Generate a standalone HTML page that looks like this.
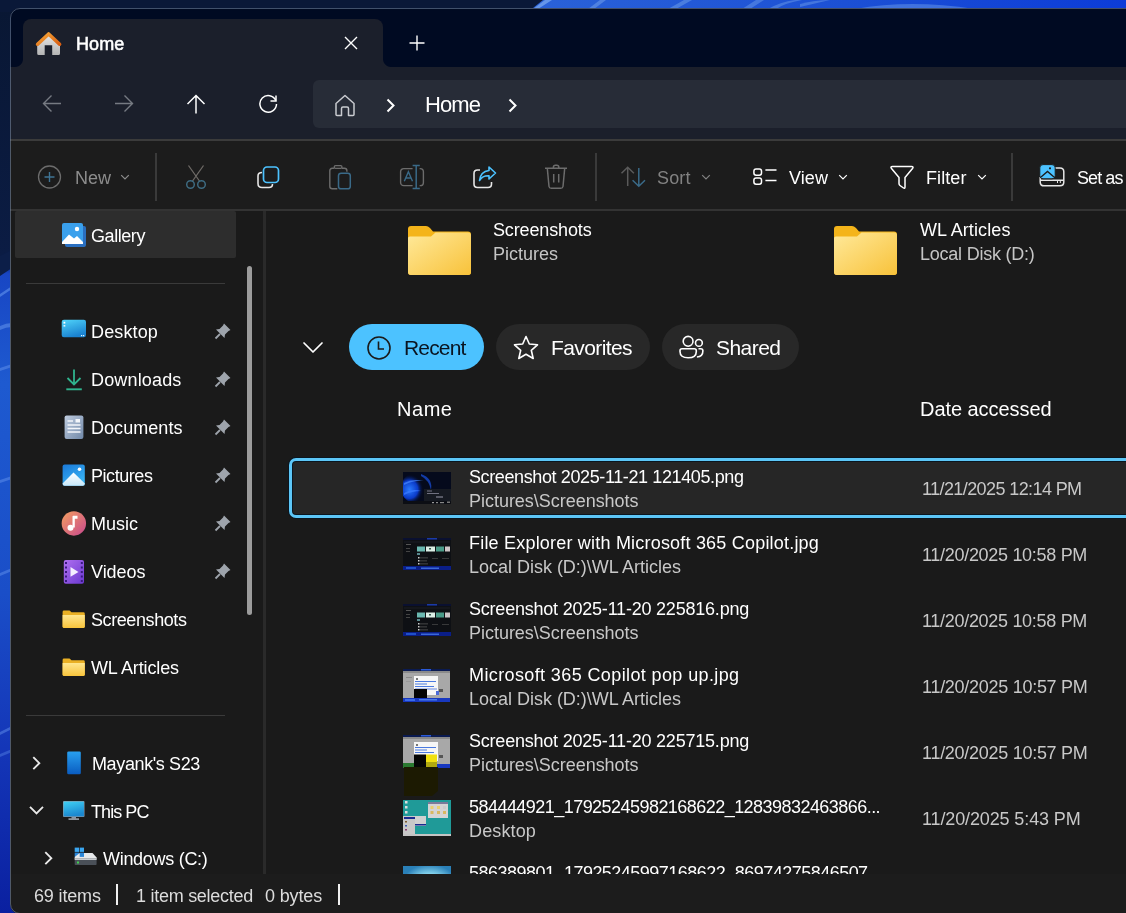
<!DOCTYPE html><html><head><meta charset="utf-8"><style>*{margin:0;padding:0;box-sizing:border-box}
html,body{width:1126px;height:913px;overflow:hidden}
body{position:relative;font-family:"Liberation Sans",sans-serif;color:#fff;background:#0b1a3a}
.a{position:absolute;display:block}
.t{position:absolute;white-space:nowrap;line-height:1;will-change:transform}
#win{position:absolute;left:10px;top:8px;width:1200px;height:906px;border-radius:10px;overflow:hidden;background:#1c1c1c}
#wi{position:absolute;left:-10px;top:-8px;width:1126px;height:913px}
#wb{position:absolute;left:10px;top:8px;width:1200px;height:906px;border-radius:10px;border:1px solid rgba(130,150,180,.5)}
</style></head><body><svg class="a" style="left:0;top:0" width="1126" height="913" viewBox="0 0 1126 913">
<defs>
<linearGradient id="wpl" x1="0" y1="0" x2="0" y2="913" gradientUnits="userSpaceOnUse">
<stop offset="0" stop-color="#091733"/><stop offset="0.28" stop-color="#0b1c44"/>
<stop offset="0.30" stop-color="#1846c4"/><stop offset="0.42" stop-color="#1e5ad0"/>
<stop offset="0.65" stop-color="#1a4ec8"/><stop offset="0.82" stop-color="#1436b8"/><stop offset="1" stop-color="#0a20a0"/></linearGradient>
<linearGradient id="wpt" x1="0" y1="0" x2="1126" y2="0" gradientUnits="userSpaceOnUse">
<stop offset="0" stop-color="#091733"/><stop offset="0.46" stop-color="#0c1e48"/>
<stop offset="0.475" stop-color="#2a62d8"/><stop offset="0.75" stop-color="#1c50d4"/><stop offset="1" stop-color="#0c3cd8"/></linearGradient>
</defs>
<rect x="0" y="0" width="1126" height="913" fill="url(#wpl)"/>
<path d="M0 256L12 250V268L0 276Z" fill="#0c1e48"/>
<rect x="0" y="0" width="1126" height="12" fill="url(#wpt)"/>
<path d="M0 0H543L533 8V12H0Z" fill="#0a1838"/>
<path d="M533 9 L545 0 L552 0 L538 9Z" fill="#7aa8f0" opacity=".75"/>
<path d="M588 9 L600 0 L606 0 L594 9Z" fill="#6a9ae8" opacity=".6"/>
<path d="M668 9 L684 0 L692 0 L676 9Z" fill="#6a9ae8" opacity=".55"/>
<path d="M742 9 L756 0 L764 0 L750 9Z" fill="#6a9ae8" opacity=".5"/>
<path d="M768 9 Q780 2 795 0 L802 0 Q785 3 776 9Z" fill="#6a9ae8" opacity=".5"/>
<path d="M800 4 Q815 0 830 0 L800 7Z" fill="#6a9ae8" opacity=".5"/>
<path d="M855 9 Q910 -1 975 9Z" fill="#6a9ae8" opacity=".5"/>
<path d="M0 294 L12 286 L12 289 L0 297Z" fill="#6a9af0" opacity=".55"/>
<path d="M0 326 Q6 323 12 323 L12 327 Q6 327 0 330Z" fill="#6a9af0" opacity=".5"/>
<path d="M0 368 L12 364 L12 367 L0 371Z" fill="#6a9af0" opacity=".45"/>
<path d="M0 480 L12 476 L12 479 L0 483Z" fill="#6a9af0" opacity=".45"/>
<path d="M0 573 L12 568 L12 571 L0 576Z" fill="#6a9af0" opacity=".45"/>
<path d="M0 732 L12 726 L12 729 L0 735Z" fill="#6a9af0" opacity=".45"/>
<path d="M0 754 L12 749 L12 752 L0 757Z" fill="#6a9af0" opacity=".35"/>
</svg><div id="win"><div id="wi"><div class="a" style="left:0px;top:0px;width:1126px;height:67px;background:#000a22"></div><div class="a" style="left:23px;top:19px;width:360px;height:48px;background:#1b1f2b;border-radius:8px 8px 0 0"></div><div class="a" style="left:15px;top:59px;width:8px;height:8px;background:radial-gradient(circle at 0 0,#000a22 7.5px,#1b1f2b 8.5px)"></div><div class="a" style="left:383px;top:59px;width:8px;height:8px;background:radial-gradient(circle at 100% 0,#000a22 7.5px,#1b1f2b 8.5px)"></div><div class="a" style="left:0px;top:67px;width:1126px;height:72px;background:#1b1f2b"></div><svg class="a" style="left:35px;top:31px;" width="28" height="26" viewBox="0 0 28 26"><defs><linearGradient id="hr" x1="0" y1="0" x2="1" y2="1"><stop offset="0" stop-color="#f8a838"/><stop offset="1" stop-color="#d85e12"/></linearGradient>
<linearGradient id="hb" x1="0" y1="0" x2="0" y2="1"><stop offset="0" stop-color="#e8e8e8"/><stop offset="1" stop-color="#b4b4b4"/></linearGradient></defs>
<path d="M2.2 12 L2.2 22.5 Q2.2 24 3.7 24 L9.7 24 L9.7 14.2 L17.2 14.2 L17.2 24 L23.5 24 Q25 24 25 22.5 L25 12 L13.5 3Z" fill="url(#hb)"/>
<path d="M2.6 13.2 L13.6 3 L24.6 13.2" fill="none" stroke="url(#hr)" stroke-width="3.6" stroke-linejoin="round" stroke-linecap="round"/></svg><div class="t" style="left:76.00px;top:34.76px;font-size:18px;color:#fff;letter-spacing:0.122px;-webkit-text-stroke:0.55px #fff;">Home</div><svg class="a" style="left:344px;top:36px;" width="14" height="14" viewBox="0 0 14 14"><path d="M1 1L13 13M13 1L1 13" stroke="#fff" stroke-width="1.4"/></svg><svg class="a" style="left:409px;top:35px;" width="16" height="16" viewBox="0 0 16 16"><path d="M8 0.5V15.5M0.5 8H15.5" stroke="#fff" stroke-width="1.4"/></svg><svg class="a" style="left:42px;top:94px;" width="20" height="19" viewBox="0 0 20 19"><path d="M19 9.5H1.5M9.5 1.5L1.5 9.5L9.5 17.5" fill="none" stroke="#767a82" stroke-width="1.4"/></svg><svg class="a" style="left:114px;top:94px;" width="20" height="19" viewBox="0 0 20 19"><path d="M1 9.5H18.5M10.5 1.5L18.5 9.5L10.5 17.5" fill="none" stroke="#767a82" stroke-width="1.4"/></svg><svg class="a" style="left:186px;top:94px;" width="20" height="20" viewBox="0 0 20 20"><path d="M10 19.5V1.5M1.5 10L10 1.5L18.5 10" fill="none" stroke="#fff" stroke-width="1.5"/></svg><svg class="a" style="left:258px;top:94px;" width="21" height="20" viewBox="0 0 21 20"><path d="M17.8 6.5A8.3 8.3 0 1 0 18.5 10" fill="none" stroke="#fff" stroke-width="1.5"/><path d="M18 1.5V7H12.5" fill="none" stroke="#fff" stroke-width="1.5"/></svg><div class="a" style="left:313px;top:80px;width:900px;height:48px;background:#272c37;border-radius:6px"></div><svg class="a" style="left:333px;top:93px;" width="24" height="24" viewBox="0 0 24 24"><path d="M3 10.5L12 2.5L21 10.5V21.5Q21 22.5 20 22.5H15.5V15.5Q15.5 14 14 14H10Q8.5 14 8.5 15.5V22.5H4Q3 22.5 3 21.5Z" fill="none" stroke="#c9cbd0" stroke-width="1.5" stroke-linejoin="round"/></svg><svg class="a" style="left:385px;top:98px;" width="11" height="15" viewBox="0 0 11 15"><path d="M2.5 1.5L8.5 7.5L2.5 13.5" fill="none" stroke="#fff" stroke-width="2"/></svg><div class="t" style="left:425.00px;top:93.67px;font-size:22px;color:#fff;letter-spacing:-0.920px;">Home</div><svg class="a" style="left:507px;top:98px;" width="11" height="15" viewBox="0 0 11 15"><path d="M2.5 1.5L8.5 7.5L2.5 13.5" fill="none" stroke="#fff" stroke-width="2"/></svg><div class="a" style="left:0px;top:139px;width:1126px;height:2px;background:#3b3b3b"></div><div class="a" style="left:0px;top:141px;width:1126px;height:68px;background:#1c1c1c"></div><svg class="a" style="left:37px;top:165px;" width="25" height="25" viewBox="0 0 25 25"><circle cx="12.5" cy="12" r="11" fill="none" stroke="#6c6c6c" stroke-width="1.3"/><path d="M12.5 7V17M7.5 12H17.5" stroke="#3f7494" stroke-width="1.4"/></svg><div class="t" style="left:74.60px;top:168.76px;font-size:18px;color:#8c8c8c;letter-spacing:-0.003px;">New</div><svg class="a" style="left:120px;top:174px;" width="10" height="7" viewBox="0 0 10 7"><path d="M1.2 1.2L5 5L8.8 1.2" fill="none" stroke="#8c8c8c" stroke-width="1.2"/></svg><div class="a" style="left:155px;top:153px;width:2px;height:48px;background:#3a3a3a"></div><svg class="a" style="left:184px;top:163px;" width="24" height="28" viewBox="0 0 24 28"><path d="M4.5 2.5L16.5 19.5M19.5 2.5L7.5 19.5" stroke="#6e6a66" stroke-width="1.3"/><circle cx="6.5" cy="21.5" r="3.8" fill="#1c1c1c" stroke="#3d6a80" stroke-width="1.5"/><circle cx="17.5" cy="21.5" r="3.8" fill="#1c1c1c" stroke="#3d6a80" stroke-width="1.5"/></svg><svg class="a" style="left:256px;top:165px;" width="25" height="24" viewBox="0 0 25 24"><path d="M6 7.5Q2 7.5 2 11V18.5Q2 22.5 6 22.5H13Q16.5 22.5 16.5 19" fill="none" stroke="#e6e6e6" stroke-width="1.6"/><rect x="7.5" y="2" width="15" height="15.5" rx="3.5" fill="none" stroke="#4cc2ff" stroke-width="1.7"/></svg><svg class="a" style="left:327px;top:164px;" width="26" height="27" viewBox="0 0 26 27"><path d="M7.2 4.3H5.3Q2.8 4.3 2.8 6.8V22.3Q2.8 24.8 5.3 24.8H10.3M15 4.3H17.4Q19.9 4.3 19.9 6.8V7.8" fill="none" stroke="#6c6c6c" stroke-width="1.4"/><rect x="7.2" y="1.6" width="7.8" height="2.8" rx="1.4" fill="none" stroke="#6c6c6c" stroke-width="1.3"/><rect x="11.5" y="9.2" width="11.8" height="15.6" rx="2.6" fill="none" stroke="#3a6a88" stroke-width="1.5"/></svg><svg class="a" style="left:399px;top:163px;" width="27" height="28" viewBox="0 0 27 28"><rect x="1.6" y="5.6" width="22.8" height="17" rx="3.2" fill="none" stroke="#6c6c6c" stroke-width="1.4"/><rect x="13.6" y="3" width="7" height="23" fill="#1c1c1c"/><path d="M17.2 2.3V25.8M13.6 2.5H20.8M13.6 25.6H20.8" stroke="#3a6a88" stroke-width="1.5"/><path d="M5.3 18.3L9.4 8.7L13.5 18.3M6.8 15H12" fill="none" stroke="#3a6a88" stroke-width="1.4"/></svg><svg class="a" style="left:472px;top:165px;" width="26" height="24" viewBox="0 0 26 24"><path d="M8 5H5.5Q2 5 2 8.5V19Q2 22.5 5.5 22.5H16Q19.5 22.5 19.5 19V17" fill="none" stroke="#e6e6e6" stroke-width="1.6"/><path d="M17 2L23.5 8L17 14V10.8Q10.5 10.5 7.5 15.5Q8.5 6.5 17 5.5Z" fill="none" stroke="#4cc2ff" stroke-width="1.6" stroke-linejoin="round"/></svg><svg class="a" style="left:543px;top:164px;" width="26" height="27" viewBox="0 0 26 27"><path d="M2 4.3H24M10.4 4.3V3.3Q10.4 1.3 12.4 1.3H13.8Q15.8 1.3 15.8 3.3V4.3M4.3 4.3L6 22.5Q6.3 24.3 8.3 24.3H17.7Q19.7 24.3 20 22.5L21.7 4.3M10.7 10V18.4M15.7 10V18.4" fill="none" stroke="#6c6c6c" stroke-width="1.5"/></svg><div class="a" style="left:595px;top:153px;width:2px;height:48px;background:#3a3a3a"></div><svg class="a" style="left:618px;top:164px;" width="30" height="25" viewBox="0 0 30 25"><path d="M9.7 22V3.2M3.5 9.2L9.7 3.2L15.9 9.2" fill="none" stroke="#5a5a5a" stroke-width="1.5"/><path d="M20.8 4V22.3M14.6 16.2L20.8 22.3L27 16.2" fill="none" stroke="#3a6a88" stroke-width="1.5"/></svg><div class="t" style="left:656.60px;top:168.76px;font-size:18px;color:#828282;letter-spacing:0.122px;">Sort</div><svg class="a" style="left:701px;top:174px;" width="10" height="7" viewBox="0 0 10 7"><path d="M1.2 1.2L5 5L8.8 1.2" fill="none" stroke="#828282" stroke-width="1.2"/></svg><svg class="a" style="left:751px;top:166px;" width="29" height="22" viewBox="0 0 29 22"><rect x="2.9" y="3" width="7.6" height="6.3" rx="2.2" fill="none" stroke="#fff" stroke-width="1.5"/><rect x="2.9" y="11.9" width="7.6" height="6.3" rx="2.2" fill="none" stroke="#fff" stroke-width="1.5"/><path d="M14.4 4H25.5M14.4 14.5H25.5" stroke="#fff" stroke-width="1.5"/></svg><div class="t" style="left:789.00px;top:168.76px;font-size:18px;color:#fff;letter-spacing:0.078px;">View</div><svg class="a" style="left:837.5px;top:174px;" width="10" height="7" viewBox="0 0 10 7"><path d="M1.2 1.2L5 5L8.8 1.2" fill="none" stroke="#fff" stroke-width="1.2"/></svg><svg class="a" style="left:888px;top:163px;" width="28" height="27" viewBox="0 0 28 27"><path d="M4.5 3.5H23.5Q26 3.5 24.5 5.5L17 14.5V24Q17 26 15.5 25L12 22.5Q11 21.8 11 20.5V14.5L3.5 5.5Q2 3.5 4.5 3.5Z" fill="none" stroke="#fff" stroke-width="1.5" stroke-linejoin="round"/></svg><div class="t" style="left:925.60px;top:168.76px;font-size:18px;color:#fff;letter-spacing:0.084px;">Filter</div><svg class="a" style="left:976.5px;top:174px;" width="10" height="7" viewBox="0 0 10 7"><path d="M1.2 1.2L5 5L8.8 1.2" fill="none" stroke="#fff" stroke-width="1.2"/></svg><div class="a" style="left:1011px;top:153px;width:2px;height:48px;background:#3a3a3a"></div><svg class="a" style="left:1038px;top:163px;" width="29" height="26" viewBox="0 0 29 26"><path d="M16 5H22Q25.8 5 25.8 8.8V19Q25.8 22.8 22 22.8H6Q2.2 22.8 2.2 19V14" fill="none" stroke="#e6e6e6" stroke-width="1.5"/><path d="M2.2 17.2H25.8" stroke="#e6e6e6" stroke-width="1.5"/><path d="M19.5 18V20M22.3 18V20" stroke="#e6e6e6" stroke-width="1"/><rect x="1.8" y="1.6" width="15.4" height="14.2" rx="3.2" fill="#4cc2ff" stroke="#1c1c1c" stroke-width="1"/><path d="M3 14L9.5 8.5L16 14" fill="none" stroke="#1c1c1c" stroke-width="1.4"/><circle cx="12" cy="5.3" r="1.1" fill="#1c1c1c"/></svg><div class="t" style="left:1076.50px;top:168.76px;font-size:18px;color:#fff;letter-spacing:-0.921px;">Set as</div><div class="a" style="left:0px;top:209px;width:1126px;height:2px;background:#333333"></div><div class="a" style="left:11px;top:211px;width:252px;height:663px;background:#1a1a1a"></div><div class="a" style="left:15px;top:211px;width:221px;height:47px;background:#2d2d2d;border-radius:2px"></div><svg class="a" style="left:61px;top:222px;" width="27" height="27" viewBox="0 0 27 27"><rect x="4" y="4" width="21" height="21" rx="2" fill="#2a6fc0"/><rect x="1" y="1" width="21" height="21" rx="2" fill="#3aa0ec"/><path d="M1 20L8 12.5L13 16.5L16 14L22 20V22H1Z" fill="#fff"/><circle cx="16" cy="7" r="2.2" fill="#fff"/></svg><div class="t" style="left:91.40px;top:227.46px;font-size:18px;color:#fff;letter-spacing:-0.430px;">Gallery</div><div class="a" style="left:26px;top:283px;width:199px;height:1px;background:#3a3a3a"></div><div class="a" style="left:247px;top:266px;width:5px;height:349px;background:#9c9c9c;border-radius:3px"></div><svg class="a" style="left:0px;top:0px;" width="1" height="1" viewBox="0 0 1 1"><defs><linearGradient id="fg" x1="0" y1="0" x2="0" y2="1"><stop offset="0" stop-color="#ffe68e"/><stop offset="1" stop-color="#f8c43c"/></linearGradient>
<linearGradient id="dg" x1="0" y1="0" x2="1" y2="1"><stop offset="0" stop-color="#c0cde0"/><stop offset="1" stop-color="#7088a8"/></linearGradient>
<linearGradient id="dkg" x1="0" y1="0" x2="0.4" y2="1"><stop offset="0" stop-color="#50d4fa"/><stop offset="1" stop-color="#1a82d0"/></linearGradient>
<linearGradient id="pg" x1="0" y1="0" x2="0.6" y2="1"><stop offset="0" stop-color="#1a78d8"/><stop offset="1" stop-color="#38b4f4"/></linearGradient>
<linearGradient id="pm" x1="0" y1="0" x2="0" y2="1"><stop offset="0" stop-color="#ffffff"/><stop offset="1" stop-color="#c8e8fa"/></linearGradient>
<linearGradient id="vg" x1="0" y1="0" x2="1" y2="1"><stop offset="0" stop-color="#b070f0"/><stop offset="1" stop-color="#6a38d0"/></linearGradient>
<linearGradient id="mon" x1="0" y1="0" x2="0.3" y2="1"><stop offset="0" stop-color="#40d0f4"/><stop offset="1" stop-color="#1a88d0"/></linearGradient>
<linearGradient id="phg" x1="0" y1="0" x2="0" y2="1"><stop offset="0" stop-color="#28a0f0"/><stop offset="1" stop-color="#0a5cc0"/></linearGradient>
<linearGradient id="mg" x1="0" y1="0" x2="1" y2="1"><stop offset="0" stop-color="#f4a060"/><stop offset="1" stop-color="#c8488e"/></linearGradient></defs></svg><svg class="a" style="left:60px;top:318.7px;" width="28" height="27" viewBox="0 0 28 27"><rect x="1.7" y="0.8" width="24.3" height="17.5" rx="2.2" fill="url(#dkg)"/><rect x="3.5" y="2.8" width="1.8" height="1.8" fill="#fff"/><rect x="3.5" y="6" width="1.8" height="1.6" fill="#e0f6ff"/><rect x="21" y="16" width="1.2" height="1.2" fill="#e0f6ff"/><rect x="23" y="16" width="1.2" height="1.2" fill="#e0f6ff"/></svg><div class="t" style="left:91.40px;top:323.46px;font-size:18px;color:#fff;letter-spacing:0.139px;">Desktop</div><svg class="a" style="left:214px;top:321.7px;" width="18" height="18" viewBox="0 0 18 18"><path d="M10 1.5L16.5 8L14.5 9L11 12.5L10.5 16L2 7.5L5.5 7L9 3.5Z" fill="#9ea4ac"/><path d="M6 12L1.5 16.5" stroke="#9ea4ac" stroke-width="1.8"/></svg><svg class="a" style="left:60px;top:366.7px;" width="28" height="27" viewBox="0 0 28 27"><path d="M14 2.5V17M7.5 11L14 17.5L20.5 11" fill="none" stroke="#30b48e" stroke-width="1.8"/><path d="M6.3 22.3H21.8" stroke="#30b48e" stroke-width="1.9"/></svg><div class="t" style="left:91.40px;top:371.46px;font-size:18px;color:#fff;letter-spacing:0.161px;">Downloads</div><svg class="a" style="left:214px;top:369.7px;" width="18" height="18" viewBox="0 0 18 18"><path d="M10 1.5L16.5 8L14.5 9L11 12.5L10.5 16L2 7.5L5.5 7L9 3.5Z" fill="#9ea4ac"/><path d="M6 12L1.5 16.5" stroke="#9ea4ac" stroke-width="1.8"/></svg><svg class="a" style="left:60px;top:414.7px;" width="28" height="27" viewBox="0 0 28 27"><rect x="4.6" y="0.4" width="18.8" height="23.7" rx="2" fill="url(#dg)"/><path d="M7.5 6H13M7.5 10H20.5M7.5 13.5H20.5M7.5 17H20.5" stroke="#f2f5fa" stroke-width="1.3"/><rect x="15.5" y="4" width="4.5" height="3.5" fill="#f2f5fa"/></svg><div class="t" style="left:91.40px;top:419.46px;font-size:18px;color:#fff;letter-spacing:0.052px;">Documents</div><svg class="a" style="left:214px;top:417.7px;" width="18" height="18" viewBox="0 0 18 18"><path d="M10 1.5L16.5 8L14.5 9L11 12.5L10.5 16L2 7.5L5.5 7L9 3.5Z" fill="#9ea4ac"/><path d="M6 12L1.5 16.5" stroke="#9ea4ac" stroke-width="1.8"/></svg><svg class="a" style="left:60px;top:462.7px;" width="28" height="27" viewBox="0 0 28 27"><rect x="2.6" y="1.4" width="22.2" height="21.3" rx="2" fill="url(#pg)"/><path d="M2.6 20.5L13.5 9.5L24.8 20.5V20.7Q24.8 22.7 22.8 22.7H4.6Q2.6 22.7 2.6 20.7Z" fill="url(#pm)"/><circle cx="19.5" cy="6.2" r="1.8" fill="#fff"/></svg><div class="t" style="left:91.40px;top:467.46px;font-size:18px;color:#fff;letter-spacing:-0.440px;">Pictures</div><svg class="a" style="left:214px;top:465.7px;" width="18" height="18" viewBox="0 0 18 18"><path d="M10 1.5L16.5 8L14.5 9L11 12.5L10.5 16L2 7.5L5.5 7L9 3.5Z" fill="#9ea4ac"/><path d="M6 12L1.5 16.5" stroke="#9ea4ac" stroke-width="1.8"/></svg><svg class="a" style="left:60px;top:510.70000000000005px;" width="28" height="27" viewBox="0 0 28 27"><circle cx="13.85" cy="12.45" r="12.2" fill="url(#mg)"/><path d="M12.5 16.5V5.5Q12.5 4.8 13.2 4.8L17.5 4.8V7.8H14.8V16.5Z" fill="#fff"/><circle cx="10.5" cy="16.8" r="3" fill="#fff"/></svg><div class="t" style="left:91.40px;top:515.46px;font-size:18px;color:#fff;letter-spacing:-0.000px;">Music</div><svg class="a" style="left:214px;top:513.7px;" width="18" height="18" viewBox="0 0 18 18"><path d="M10 1.5L16.5 8L14.5 9L11 12.5L10.5 16L2 7.5L5.5 7L9 3.5Z" fill="#9ea4ac"/><path d="M6 12L1.5 16.5" stroke="#9ea4ac" stroke-width="1.8"/></svg><svg class="a" style="left:60px;top:558.7px;" width="28" height="27" viewBox="0 0 28 27"><rect x="3.8" y="1" width="20.2" height="23.8" rx="2" fill="url(#vg)"/><rect x="5" y="3" width="2" height="2" fill="#3a1a80"/><rect x="5" y="7.5" width="2" height="2" fill="#3a1a80"/><rect x="5" y="12" width="2" height="2" fill="#3a1a80"/><rect x="5" y="16.5" width="2" height="2" fill="#3a1a80"/><rect x="5" y="21" width="2" height="2" fill="#3a1a80"/><rect x="20.8" y="3" width="2" height="2" fill="#3a1a80"/><rect x="20.8" y="7.5" width="2" height="2" fill="#3a1a80"/><rect x="20.8" y="12" width="2" height="2" fill="#3a1a80"/><rect x="20.8" y="16.5" width="2" height="2" fill="#3a1a80"/><rect x="20.8" y="21" width="2" height="2" fill="#3a1a80"/><path d="M10.5 8L18.5 12.9L10.5 17.8Z" fill="#f4eeff"/></svg><div class="t" style="left:91.40px;top:563.46px;font-size:18px;color:#fff;letter-spacing:-0.035px;">Videos</div><svg class="a" style="left:214px;top:561.7px;" width="18" height="18" viewBox="0 0 18 18"><path d="M10 1.5L16.5 8L14.5 9L11 12.5L10.5 16L2 7.5L5.5 7L9 3.5Z" fill="#9ea4ac"/><path d="M6 12L1.5 16.5" stroke="#9ea4ac" stroke-width="1.8"/></svg><svg class="a" style="left:60px;top:606.7px;" width="28" height="27" viewBox="0 0 28 27"><path d="M2.6 5Q2.6 3.6 4 3.6H9.5L11.5 5.3H23.4Q24.8 5.3 24.8 6.7V19.6Q24.8 21 23.4 21H4Q2.6 21 2.6 19.6Z" fill="#eab024"/><path d="M2.6 8H24.8V19.6Q24.8 21 23.4 21H4Q2.6 21 2.6 19.6Z" fill="url(#fg)"/></svg><div class="t" style="left:91.40px;top:611.46px;font-size:18px;color:#fff;letter-spacing:-0.414px;">Screenshots</div><svg class="a" style="left:60px;top:654.7px;" width="28" height="27" viewBox="0 0 28 27"><path d="M2.6 5Q2.6 3.6 4 3.6H9.5L11.5 5.3H23.4Q24.8 5.3 24.8 6.7V19.6Q24.8 21 23.4 21H4Q2.6 21 2.6 19.6Z" fill="#eab024"/><path d="M2.6 8H24.8V19.6Q24.8 21 23.4 21H4Q2.6 21 2.6 19.6Z" fill="url(#fg)"/></svg><div class="t" style="left:91.40px;top:659.46px;font-size:18px;color:#fff;letter-spacing:-0.123px;">WL Articles</div><div class="a" style="left:26px;top:715px;width:199px;height:1px;background:#3a3a3a"></div><svg class="a" style="left:30px;top:755px;" width="13" height="17" viewBox="0 0 13 17"><path d="M3.3 2.2L9.3 8.2L3.3 14.2" fill="none" stroke="#e8e8e8" stroke-width="1.9"/></svg><svg class="a" style="left:65px;top:750px;" width="19" height="25" viewBox="0 0 19 25"><rect x="2.2" y="1.4" width="13.6" height="22.9" rx="1.4" fill="url(#phg)"/></svg><div class="t" style="left:91.80px;top:755.26px;font-size:18px;color:#fff;letter-spacing:-0.374px;">Mayank&#x27;s S23</div><svg class="a" style="left:28px;top:804px;" width="17" height="12" viewBox="0 0 17 12"><path d="M2 2.8L8.5 9.3L15 2.8" fill="none" stroke="#e8e8e8" stroke-width="1.9"/></svg><svg class="a" style="left:61px;top:799px;" width="25" height="23" viewBox="0 0 25 23"><rect x="2" y="2" width="21.5" height="16" rx="1" fill="#8a96a4"/><rect x="2.6" y="2.6" width="20.3" height="14.8" fill="url(#mon)"/><rect x="10.5" y="18" width="4.5" height="1.6" fill="#8a96a4"/><rect x="7.5" y="19.4" width="10.5" height="1.4" fill="#a8b2bc"/></svg><div class="t" style="left:91.40px;top:802.96px;font-size:18px;color:#fff;letter-spacing:-0.930px;">This PC</div><svg class="a" style="left:42px;top:850px;" width="13" height="17" viewBox="0 0 13 17"><path d="M3.3 2.2L9.3 8.2L3.3 14.2" fill="none" stroke="#e8e8e8" stroke-width="1.9"/></svg><svg class="a" style="left:73px;top:846px;" width="26" height="21" viewBox="0 0 26 21"><rect x="1.7" y="1.6" width="4.3" height="4.3" fill="#3aa6f0"/><rect x="6.7" y="1.6" width="4.3" height="4.3" fill="#3aa6f0"/><rect x="1.7" y="6.6" width="4.3" height="4.3" fill="#2a86d8"/><path d="M6.7 7H19.5L23.6 11.5V13H1.7V11Z" fill="#e6e8ea"/><rect x="6.7" y="6.6" width="4.3" height="4.3" fill="#2a86d8"/><rect x="1.7" y="12.5" width="21.9" height="6.5" rx="0.8" fill="#4a5058"/><rect x="1.7" y="12.5" width="21.9" height="1.5" fill="#c8ccd0"/><rect x="4" y="15.5" width="2" height="2" fill="#40d050"/></svg><div class="t" style="left:103.00px;top:850.26px;font-size:18px;color:#fff;letter-spacing:-0.292px;">Windows (C:)</div><div class="a" style="left:263px;top:211px;width:3px;height:663px;background:#2a2a2a"></div><div class="a" style="left:266px;top:211px;width:900px;height:663px;background:#1a1a1a;overflow:hidden"><div class="a" style="left:-266px;top:-211px;width:1400px;height:913px"><svg class="a" style="left:407px;top:225px;" width="65" height="51" viewBox="0 0 65 51"><defs><linearGradient id="fb" x1="0" y1="0" x2="1" y2="1"><stop offset="0" stop-color="#ffe99a"/><stop offset="1" stop-color="#f8c23a"/></linearGradient></defs>
<path d="M1 4Q1 1 4 1H19Q21 1 23 3L26 6.5H61Q64 6.5 64 9.5V47Q64 50 61 50H4Q1 50 1 47Z" fill="#f4b41a"/>
<path d="M1 13Q1 11.5 3 11.5H24L28.5 7.5H61Q64 7.5 64 10.5V47Q64 50 61 50H4Q1 50 1 47Z" fill="url(#fb)"/></svg><div class="t" style="left:493.00px;top:221.06px;font-size:18px;color:#fff;letter-spacing:-0.141px;">Screenshots</div><div class="t" style="left:493.00px;top:244.76px;font-size:18px;color:#c5c5c5;letter-spacing:-0.002px;">Pictures</div><svg class="a" style="left:833px;top:225px;" width="65" height="51" viewBox="0 0 65 51"><defs><linearGradient id="fb2" x1="0" y1="0" x2="1" y2="1"><stop offset="0" stop-color="#ffe99a"/><stop offset="1" stop-color="#f8c23a"/></linearGradient></defs>
<path d="M1 4Q1 1 4 1H19Q21 1 23 3L26 6.5H61Q64 6.5 64 9.5V47Q64 50 61 50H4Q1 50 1 47Z" fill="#f4b41a"/>
<path d="M1 13Q1 11.5 3 11.5H24L28.5 7.5H61Q64 7.5 64 10.5V47Q64 50 61 50H4Q1 50 1 47Z" fill="url(#fb2)"/></svg><div class="t" style="left:919.50px;top:221.06px;font-size:18px;color:#fff;letter-spacing:0.105px;">WL Articles</div><div class="t" style="left:919.50px;top:244.76px;font-size:18px;color:#c5c5c5;letter-spacing:-0.234px;">Local Disk (D:)</div><svg class="a" style="left:302px;top:340.7px;" width="22" height="14" viewBox="0 0 22 14"><path d="M2 2L11 11L20 2" fill="none" stroke="#fff" stroke-width="1.7" stroke-linecap="round" stroke-linejoin="round"/></svg><div class="a" style="left:349px;top:324px;width:135px;height:46px;background:#4cc2ff;border-radius:23px"></div><svg class="a" style="left:366px;top:335px;" width="26" height="26" viewBox="0 0 26 26"><circle cx="13" cy="13" r="11" fill="none" stroke="#1a1a1a" stroke-width="1.6"/><path d="M12.5 6.5V14H18" fill="none" stroke="#1a1a1a" stroke-width="1.6"/></svg><div class="t" style="left:403.60px;top:337.22px;font-size:21px;color:#0a1420;letter-spacing:-0.839px;">Recent</div><div class="a" style="left:496px;top:324px;width:154px;height:46px;background:#282828;border-radius:23px"></div><svg class="a" style="left:512px;top:334px;" width="28" height="28" viewBox="0 0 28 28"><path d="M14 2.5L17.3 10L25.5 10.8L19.3 16.3L21.2 24.5L14 20.2L6.8 24.5L8.7 16.3L2.5 10.8L10.7 10Z" fill="none" stroke="#fff" stroke-width="1.6" stroke-linejoin="round"/></svg><div class="t" style="left:550.60px;top:337.22px;font-size:21px;color:#fff;letter-spacing:-0.595px;">Favorites</div><div class="a" style="left:662px;top:324px;width:137px;height:46px;background:#282828;border-radius:23px"></div><svg class="a" style="left:678px;top:334px;" width="28" height="28" viewBox="0 0 28 28"><circle cx="10.1" cy="7.3" r="4.9" fill="none" stroke="#fff" stroke-width="1.6"/><circle cx="20.9" cy="8.9" r="3.4" fill="none" stroke="#fff" stroke-width="1.6"/><path d="M2 16.7Q2 14.7 4 14.7H16.3Q18.3 14.7 18.3 16.7V17.5Q18.3 23.8 10.1 23.8Q2 23.8 2 17.5Z" fill="none" stroke="#fff" stroke-width="1.6"/><path d="M20.5 14.7H22.8Q24.9 14.7 24.9 16.8Q24.9 22.8 18.9 23" fill="none" stroke="#fff" stroke-width="1.6"/></svg><div class="t" style="left:716.40px;top:337.22px;font-size:21px;color:#fff;letter-spacing:-0.535px;">Shared</div><div class="t" style="left:397.00px;top:398.87px;font-size:20px;color:#fff;letter-spacing:0.538px;">Name</div><div class="t" style="left:919.50px;top:399.07px;font-size:20px;color:#fff;letter-spacing:-0.061px;">Date accessed</div><div class="a" style="left:289px;top:458px;width:900px;height:60px;background:#262626;border:3px solid #5cc6f7;border-radius:7px;box-shadow:0 0 0 1px #0a1620,inset 0 0 0 1px #0a1620"></div><div class="t" style="left:468.50px;top:467.76px;font-size:18px;color:#fff;letter-spacing:-0.386px;">Screenshot 2025-11-21 121405.png</div><div class="t" style="left:468.50px;top:491.76px;font-size:18px;color:#c8c8c8;letter-spacing:-0.028px;">Pictures\Screenshots</div><div class="t" style="left:922.00px;top:479.56px;font-size:18px;color:#c8c8c8;letter-spacing:-0.594px;">11/21/2025 12:14 PM</div><div class="t" style="left:468.50px;top:533.76px;font-size:18px;color:#fff;letter-spacing:0.202px;">File Explorer with Microsoft 365 Copilot.jpg</div><div class="t" style="left:468.50px;top:557.76px;font-size:18px;color:#c8c8c8;letter-spacing:-0.014px;">Local Disk (D:)\WL Articles</div><div class="t" style="left:922.00px;top:545.56px;font-size:18px;color:#c8c8c8;letter-spacing:-0.304px;">11/20/2025 10:58 PM</div><div class="t" style="left:468.50px;top:599.76px;font-size:18px;color:#fff;letter-spacing:-0.215px;">Screenshot 2025-11-20 225816.png</div><div class="t" style="left:468.50px;top:623.76px;font-size:18px;color:#c8c8c8;letter-spacing:-0.028px;">Pictures\Screenshots</div><div class="t" style="left:922.00px;top:611.56px;font-size:18px;color:#c8c8c8;letter-spacing:-0.304px;">11/20/2025 10:58 PM</div><div class="t" style="left:468.50px;top:665.76px;font-size:18px;color:#fff;letter-spacing:0.386px;">Microsoft 365 Copilot pop up.jpg</div><div class="t" style="left:468.50px;top:689.76px;font-size:18px;color:#c8c8c8;letter-spacing:-0.014px;">Local Disk (D:)\WL Articles</div><div class="t" style="left:922.00px;top:677.56px;font-size:18px;color:#c8c8c8;letter-spacing:-0.278px;">11/20/2025 10:57 PM</div><div class="t" style="left:468.50px;top:731.76px;font-size:18px;color:#fff;letter-spacing:-0.215px;">Screenshot 2025-11-20 225715.png</div><div class="t" style="left:468.50px;top:755.76px;font-size:18px;color:#c8c8c8;letter-spacing:-0.028px;">Pictures\Screenshots</div><div class="t" style="left:922.00px;top:743.56px;font-size:18px;color:#c8c8c8;letter-spacing:-0.278px;">11/20/2025 10:57 PM</div><div class="t" style="left:468.50px;top:797.76px;font-size:18px;color:#fff;letter-spacing:-0.542px;">584444921_17925245982168622_12839832463866...</div><div class="t" style="left:468.50px;top:821.76px;font-size:18px;color:#c8c8c8;letter-spacing:0.139px;">Desktop</div><div class="t" style="left:922.00px;top:809.56px;font-size:18px;color:#c8c8c8;letter-spacing:-0.126px;">11/20/2025 5:43 PM</div><div class="t" style="left:468.50px;top:863.76px;font-size:18px;color:#fff;letter-spacing:-0.520px;">586389801_17925245997168622_86974275846507...</div><div class="t" style="left:468.50px;top:887.76px;font-size:18px;color:#c8c8c8;letter-spacing:0.139px;">Desktop</div><div class="t" style="left:922.00px;top:875.56px;font-size:18px;color:#c8c8c8;letter-spacing:-0.126px;">11/20/2025 5:43 PM</div><svg class="a" style="left:403px;top:472px;" width="48" height="32" viewBox="0 0 48 32"><defs><radialGradient id="bl1" cx=".3" cy=".55" r=".5"><stop offset="0" stop-color="#2a7aff"/><stop offset=".6" stop-color="#0a3ac8"/><stop offset="1" stop-color="#040c30" stop-opacity="0"/></radialGradient></defs><rect width="48" height="32" fill="#050a1c"/><ellipse cx="12" cy="16" rx="14" ry="15" fill="url(#bl1)"/><path d="M1 11Q10 6 21 9Q12 8 1 13Z" fill="#4a8aff" opacity=".7"/><path d="M1 21Q9 16 18 19Q9 19 1 23Z" fill="#3a7aff" opacity=".8"/><path d="M18 2Q30 6 28 18Q26 8 18 4Z" fill="#1a50e0" opacity=".7"/><rect x="21" y="17" width="27" height="12" fill="#161a22"/><rect x="24" y="18.5" width="5" height="1" fill="#778"/><rect x="24" y="21" width="12" height="0.8" fill="#889"/><rect x="33" y="24.5" width="7" height="1" fill="#99a"/><rect x="0" y="29" width="48" height="3" fill="#0c0e14"/><rect x="29" y="30" width="2" height="1.2" fill="#999"/><rect x="33" y="30" width="2" height="1.2" fill="#888"/><rect x="37" y="30" width="4" height="1.2" fill="#888"/><rect x="44" y="29.5" width="3" height="1.5" fill="#777"/></svg><svg class="a" style="left:403px;top:538px;" width="48" height="32" viewBox="0 0 48 32"><rect width="48" height="32" fill="#0e1014"/><rect x="0" y="0" width="48" height="2" fill="#0a1030"/><rect x="24" y="0" width="10" height="1.5" fill="#1a3aa8"/><rect x="1" y="3" width="46" height="2" fill="#14161c"/><rect x="14" y="8.5" width="8" height="5" fill="#6ab8b0"/><rect x="23" y="8.5" width="9" height="5" fill="#dcefe6"/><rect x="26" y="10" width="2" height="1.5" fill="#3a5a50"/><rect x="33" y="8.5" width="8" height="5" fill="#4a9a88"/><rect x="42" y="8.5" width="5" height="5" fill="#cfc6c8"/><rect x="14" y="15" width="3" height="2" fill="#5a8a90"/><rect x="15" y="19" width="1.5" height="1.5" fill="#ccc"/><rect x="15" y="22" width="1.5" height="1.5" fill="#ccc"/><rect x="15" y="25" width="1.5" height="1.5" fill="#ccc"/><rect x="17" y="19.5" width="8" height=".8" fill="#555"/><rect x="17" y="22.5" width="7" height=".8" fill="#555"/><rect x="17" y="25.5" width="8" height=".8" fill="#555"/><rect x="29" y="20" width="6" height=".8" fill="#444"/><rect x="39" y="20" width="7" height=".8" fill="#444"/><rect x="3" y="6" width="5" height="1" fill="#555"/><rect x="3" y="10" width="4" height="1" fill="#444"/><rect x="3" y="13" width="4" height="1" fill="#444"/><rect x="0" y="28" width="48" height="4" fill="#0a1e88"/><rect x="3" y="29" width="10" height="2" fill="#2050c8"/><rect x="18" y="29.5" width="18" height="1.5" fill="#3a68d8"/></svg><svg class="a" style="left:403px;top:604px;" width="48" height="32" viewBox="0 0 48 32"><rect width="48" height="32" fill="#0e1014"/><rect x="0" y="0" width="48" height="2" fill="#0a1030"/><rect x="24" y="0" width="10" height="1.5" fill="#1a3aa8"/><rect x="1" y="3" width="46" height="2" fill="#14161c"/><rect x="14" y="8.5" width="8" height="5" fill="#6ab8b0"/><rect x="23" y="8.5" width="9" height="5" fill="#dcefe6"/><rect x="26" y="10" width="2" height="1.5" fill="#3a5a50"/><rect x="33" y="8.5" width="8" height="5" fill="#4a9a88"/><rect x="42" y="8.5" width="5" height="5" fill="#cfc6c8"/><rect x="14" y="15" width="3" height="2" fill="#5a8a90"/><rect x="15" y="19" width="1.5" height="1.5" fill="#ccc"/><rect x="15" y="22" width="1.5" height="1.5" fill="#ccc"/><rect x="15" y="25" width="1.5" height="1.5" fill="#ccc"/><rect x="17" y="19.5" width="8" height=".8" fill="#555"/><rect x="17" y="22.5" width="7" height=".8" fill="#555"/><rect x="17" y="25.5" width="8" height=".8" fill="#555"/><rect x="29" y="20" width="6" height=".8" fill="#444"/><rect x="39" y="20" width="7" height=".8" fill="#444"/><rect x="3" y="6" width="5" height="1" fill="#555"/><rect x="3" y="10" width="4" height="1" fill="#444"/><rect x="3" y="13" width="4" height="1" fill="#444"/><rect x="0" y="28" width="48" height="4" fill="#0a1e88"/><rect x="3" y="29" width="10" height="2" fill="#2050c8"/><rect x="18" y="29.5" width="18" height="1.5" fill="#3a68d8"/></svg><svg class="a" style="left:403px;top:669px;" width="47" height="33" viewBox="0 0 47 33"><rect width="47" height="33" fill="#a8a8a8"/><rect x="0" y="0" width="47" height="2" fill="#0a1a50"/><rect x="18" y="0" width="10" height="1.5" fill="#2a5ad8"/><rect x="0" y="2" width="47" height="2" fill="#8a8a8a"/><rect x="11" y="7" width="24" height="19" fill="#f6f6f6"/><rect x="13" y="9" width="2" height="2" fill="#777"/><rect x="12" y="12" width="21" height="1" fill="#4a7ae0"/><rect x="12" y="14.5" width="12" height="1" fill="#4a7ae0"/><rect x="12" y="17" width="19" height="1" fill="#4a7ae0"/><rect x="12" y="19.5" width="22" height="1" fill="#6a8ae0"/><rect x="11" y="20" width="13" height="11" fill="#050505"/><rect x="33" y="22" width="3" height="4" fill="#4a6ad8"/><rect x="36" y="20" width="4" height="3" fill="#555"/><rect x="3" y="8" width="6" height="1" fill="#888"/><rect x="3" y="12" width="5" height="1" fill="#999"/><rect x="0" y="29" width="47" height="4" fill="#1838c0"/><rect x="2" y="30" width="10" height="2" fill="#3a6ae8"/><rect x="16" y="30" width="18" height="1.5" fill="#4a7ae8"/></svg><svg class="a" style="left:403px;top:735px;" width="47" height="33" viewBox="0 0 47 33"><rect width="47" height="33" fill="#a8a8a8"/><rect x="0" y="0" width="47" height="2" fill="#0a1a50"/><rect x="18" y="0" width="10" height="1.5" fill="#2a5ad8"/><rect x="0" y="2" width="47" height="2" fill="#8a8a8a"/><rect x="11" y="7" width="24" height="19" fill="#f6f6f6"/><rect x="13" y="9" width="2" height="2" fill="#777"/><rect x="12" y="12" width="21" height="1" fill="#4a7ae0"/><rect x="12" y="14.5" width="12" height="1" fill="#4a7ae0"/><rect x="12" y="17" width="19" height="1" fill="#4a7ae0"/><rect x="11" y="19.5" width="12" height="13.5" fill="#050505"/><rect x="23" y="19.5" width="11" height="13.5" fill="#f0e010"/><rect x="23" y="27" width="11" height="6" fill="#b0a810"/><rect x="36" y="20" width="4" height="3" fill="#555"/><rect x="0" y="28" width="11" height="5" fill="#2a7a30"/><rect x="34" y="29" width="13" height="4" fill="#1838c0"/></svg><svg class="a" style="left:404px;top:767px;" width="34" height="29" viewBox="0 0 34 29"><path d="M0 0H34V24L28 29H0Z" fill="#1c1a02"/></svg><svg class="a" style="left:403px;top:800px;" width="48" height="36" viewBox="0 0 48 36"><rect width="48" height="36" fill="#1f9a98"/><rect x="2" y="1" width="2.5" height="2.5" fill="#ddd"/><rect x="2" y="6" width="2.5" height="2.5" fill="#ddd"/><rect x="2" y="11" width="2.5" height="2.5" fill="#ddd"/><rect x="25" y="2" width="20" height="16" fill="#d4d4d4"/><rect x="25" y="2" width="20" height="2" fill="#7a7a9a"/><rect x="27.5" y="6" width="3" height="3" fill="#e8d070"/><rect x="34" y="6" width="3" height="3" fill="#e8d070"/><rect x="40" y="6" width="3" height="3" fill="#ccc"/><rect x="27.5" y="11" width="3" height="3" fill="#d8b860"/><rect x="34" y="11" width="3" height="3" fill="#d8b860"/><rect x="40" y="11" width="3" height="3" fill="#d8b860"/><rect x="0" y="16" width="12" height="18" fill="#c8c8c8"/><rect x="1" y="17" width="11" height="2" fill="#1a2a90"/><rect x="12" y="16" width="11" height="10" fill="#d0d0d0"/><rect x="12" y="24" width="11" height="1.5" fill="#1a2a90"/><rect x="2" y="21" width="2" height="1.5" fill="#7a5a30"/><rect x="2" y="25" width="2" height="1.5" fill="#3a5ab0"/><rect x="2" y="29" width="2" height="1.5" fill="#8a3a70"/><rect x="0" y="34" width="48" height="2" fill="#c4c4c4"/></svg><svg class="a" style="left:403px;top:866px;" width="48" height="33" viewBox="0 0 48 33"><defs><radialGradient id="sk" cx=".55" cy=".5" r=".55"><stop offset="0" stop-color="#e8fbff"/><stop offset=".45" stop-color="#8ad8f0"/><stop offset="1" stop-color="#2a80b8"/></radialGradient></defs><rect width="48" height="33" fill="url(#sk)"/></svg></div></div><div class="a" style="left:11px;top:874px;width:1126px;height:40px;background:#1c1c1c"></div><div class="t" style="left:33.70px;top:886.96px;font-size:18px;color:#dcdcdc;letter-spacing:-0.153px;">69 items</div><div class="a" style="left:116px;top:884px;width:2px;height:21px;background:#f0f0f0"></div><div class="t" style="left:136.00px;top:886.96px;font-size:18px;color:#dcdcdc;letter-spacing:-0.270px;">1 item selected</div><div class="t" style="left:264.60px;top:886.96px;font-size:18px;color:#dcdcdc;letter-spacing:-0.147px;">0 bytes</div><div class="a" style="left:338px;top:884px;width:2px;height:21px;background:#f0f0f0"></div></div></div><div id="wb"></div></body></html>
